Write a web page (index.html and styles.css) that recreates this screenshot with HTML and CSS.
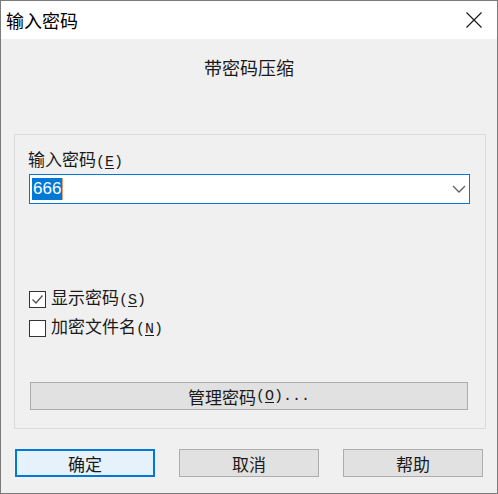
FILE: index.html
```html
<!DOCTYPE html>
<html lang="zh-CN">
<head>
<meta charset="utf-8">
<title>输入密码</title>
<link rel="stylesheet" href="styles.css">
</head>
<body>
<div class="window">
  <div class="titlebar">
    <span class="title">输入密码</span>
    <span class="close">
      <svg width="16" height="16" viewBox="0 0 16 16"><path d="M0.5 0.5 L15.5 15.5 M15.5 0.5 L0.5 15.5" stroke="#1a1a1a" stroke-width="1.2" fill="none"/></svg>
    </span>
  </div>
  <div class="content">
    <div class="subtitle">带密码压缩</div>
    <div class="group">
      <div class="label">输入密码<span class="m">(<u>E</u>)</span></div>
      <div class="combo">
        <span class="sel">666</span><span class="caret"></span>
        <span class="chev">
          <svg width="14" height="8" viewBox="0 0 14 8"><path d="M1 1 L7 7 L13 1" stroke="#606060" stroke-width="1.3" fill="none"/></svg>
        </span>
      </div>
      <div class="check first">
        <span class="box"><svg width="15" height="15" viewBox="0 0 15 15"><path d="M2.5 7.5 L6 11 L12.5 3.5" stroke="#555" stroke-width="1.4" fill="none"/></svg></span>
        <span>显示密码<span class="m">(<u>S</u>)</span></span>
      </div>
      <div class="check">
        <span class="box"></span>
        <span>加密文件名<span class="m">(<u>N</u>)</span></span>
      </div>
      <div class="btn manage">管理密码<span class="m">(<u>O</u>)...</span></div>
    </div>
    <div class="buttons">
      <div class="btn default">确定</div>
      <div class="btn">取消</div>
      <div class="btn">帮助</div>
    </div>
  </div>
</div>
</body>
</html>
```

FILE: styles.css
```css
* { box-sizing: border-box; }
html, body { margin: 0; padding: 0; }
body {
  width: 498px;
  height: 494px;
  font-family: "Noto Sans CJK SC", "Noto Sans", sans-serif;
  color: #1a1a1a;
  background: #f0f0f0;
}
.window {
  width: 498px;
  height: 494px;
  border: 1px solid #7a7a7a;
  display: flex;
  flex-direction: column;
}
.titlebar {
  height: 38px;
  background: #fff;
  display: flex;
  align-items: center;
  justify-content: space-between;
  padding: 0 15px 0 5px;
}
.title {
  font-size: 18px;
  line-height: 20px;
  color: #000;
}
.close { display: flex; width: 16px; height: 16px; }
.content {
  flex: 1;
  background: #f0f0f0;
  padding-top: 18px;
  display: flex;
  flex-direction: column;
}
.subtitle {
  text-align: center;
  font-size: 18px;
  line-height: 20px;
  height: 20px;
}
.m {
  font-family: "Liberation Mono", "DejaVu Sans Mono", monospace;
  font-size: 15px;
}
.group {
  margin: 57px 0 0 13px;
  width: 472px;
  border: 1px solid #dcdcdc;
  padding: 14px 0 18px 13px;
  display: flex;
  flex-direction: column;
}
.label {
  font-size: 17px;
  line-height: 20px;
  height: 20px;
}
u { text-underline-offset: 2px; }
.combo {
  margin: 5px 0 0 1px;
  width: 441px;
  height: 30px;
  background: #fff;
  border: 1px solid #0078d7;
  display: flex;
  align-items: center;
  padding-left: 2px;
}
.sel {
  background: #0078d7;
  color: #fff;
  font-family: "Liberation Sans", sans-serif;
  font-size: 17px;
  line-height: 22px;
  padding: 0 1px;
}
.caret {
  width: 1px;
  height: 22px;
  background: #e0a070;
}
.chev {
  margin-left: auto;
  margin-right: 3px;
  width: 14px;
  display: flex;
}
.check {
  display: flex;
  align-items: center;
  gap: 5px;
  font-size: 17px;
  line-height: 20px;
  height: 20px;
  margin-top: 9px;
  padding-left: 1px;
}
.check.first { margin-top: 85px; }
.box {
  width: 17px;
  height: 17px;
  border: 1px solid #333;
  background: #fff;
  display: flex;
  align-items: center;
  justify-content: center;
}
.btn {
  height: 28px;
  border: 1px solid #adadad;
  background: #e1e1e1;
  display: flex;
  align-items: center;
  justify-content: center;
  font-size: 17px;
}
.manage {
  margin: 44px 0 0 2px;
  width: 438px;
}
.buttons {
  display: flex;
  gap: 24px;
  margin: 20px 0 0 14px;
}
.buttons .btn { width: 140px; }
.buttons .btn.default {
  border: 2px solid #0078d7;
  background: #e5f1fb;
}
```
